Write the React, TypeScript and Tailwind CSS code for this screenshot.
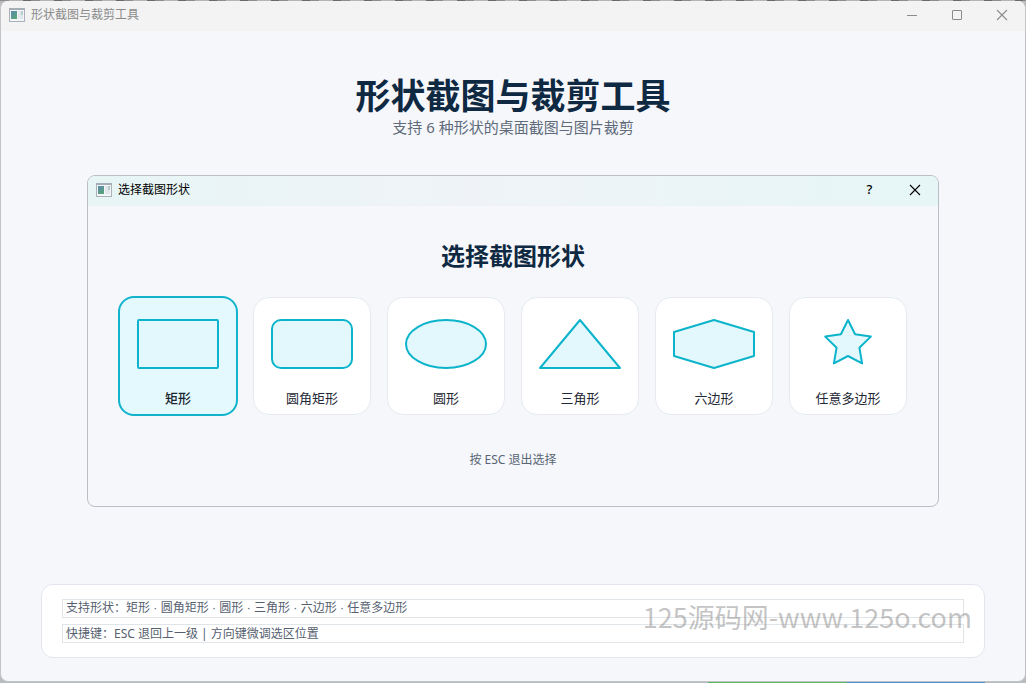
import type { ReactNode } from "react";

const outline = {
  fill: "#e3f8fd",
  stroke: "#0cb4cb",
  strokeWidth: 2,
  strokeLinejoin: "round" as const,
};

type Shape = { id: string; label: string; drawing: ReactNode };

const shapes: Shape[] = [
  { id: "rect", label: "矩形", drawing: <rect x="2" y="2" width="80" height="48" rx="1" {...outline} /> },
  { id: "rounded", label: "圆角矩形", drawing: <rect x="2" y="2" width="80" height="48" rx="9" {...outline} /> },
  { id: "circle", label: "圆形", drawing: <ellipse cx="42" cy="26" rx="40" ry="24" {...outline} /> },
  { id: "triangle", label: "三角形", drawing: <polygon points="42,2 82,50 2,50" {...outline} /> },
  { id: "hexagon", label: "六边形", drawing: <polygon points="42,2 82,14 82,38 42,50 2,38 2,14" {...outline} /> },
  {
    id: "polygon",
    label: "任意多边形",
    drawing: (
      <polygon
        points="42,2 49.1,16.3 64.8,18.6 53.4,29.7 56.1,45.4 42,38 27.9,45.4 30.6,29.7 19.2,18.6 34.9,16.3"
        {...outline}
      />
    ),
  },
];

function AppIcon() {
  return (
    <svg width="16" height="14" viewBox="0 0 16 14" aria-hidden="true">
      <defs>
        <linearGradient id="pane" x1="0" y1="0" x2="0.6" y2="1">
          <stop offset="0" stopColor="#5b8bb0" />
          <stop offset="1" stopColor="#5aa27c" />
        </linearGradient>
      </defs>
      <rect x="0.5" y="0.5" width="15" height="13" fill="#f3f5f7" stroke="#a9b2ba" />
      <rect x="0" y="0" width="16" height="2" fill="#a5adb6" />
      <rect x="2" y="3" width="6" height="8" fill="url(#pane)" />
      <rect x="9" y="3" width="3" height="8" fill="#e4e8ec" />
      <rect x="12" y="3" width="2" height="4" fill="#b3cdc9" />
      <rect x="12" y="7" width="2" height="4" fill="#e1e6ea" />
    </svg>
  );
}

function CloseGlyph() {
  return (
    <svg width="12" height="12" viewBox="0 0 12 12" fill="none" stroke="currentColor" aria-hidden="true">
      <path d="M1 1 11 11M11 1 1 11" strokeWidth="1.1" />
    </svg>
  );
}

function ShapeCard({ shape, selected }: { shape: Shape; selected: boolean }) {
  return (
    <button
      type="button"
      aria-pressed={selected}
      className={
        selected
          ? "flex h-[120px] flex-col items-center rounded-2xl border-2 border-[#12b4cc] bg-[#e3f9fd] pt-5 text-[13px] leading-5 font-medium text-[#1a2730]"
          : "m-px flex h-[118px] flex-col items-center rounded-2xl border border-[#e6eaf0] bg-white pt-5 text-[13px] leading-5 text-[#1f2937]"
      }
    >
      <svg width="84" height="52" viewBox="0 0 84 52" aria-hidden="true">
        {shape.drawing}
      </svg>
      <span className="mt-[18px]">{shape.label}</span>
    </button>
  );
}

function ShapeDialog() {
  return (
    <section
      aria-label="选择截图形状"
      className="mx-[86px] mt-[38px] overflow-hidden rounded-lg border border-[#b9bfc5]"
    >
      <header className="flex h-[30px] items-center bg-linear-to-r from-[#e7f5f5] via-[#eff3f7] via-45% to-[#e6f6f6] pb-0.5 pl-2 text-xs text-black">
        <AppIcon />
        <span className="ml-1.5">选择截图形状</span>
        <div className="ml-auto flex h-full">
          <button type="button" aria-label="帮助" className="flex w-[45px] items-center justify-center text-[13px] font-medium">
            ?
          </button>
          <button type="button" aria-label="关闭" className="flex w-[46px] items-center justify-center">
            <CloseGlyph />
          </button>
        </div>
      </header>
      <h2 className="mt-8 text-center text-2xl leading-9 font-bold text-[#0f2942]">选择截图形状</h2>
      <div className="mt-[22px] grid grid-cols-6 gap-3.5 px-[30px]">
        {shapes.map((shape) => (
          <ShapeCard key={shape.id} shape={shape} selected={shape.id === "rect"} />
        ))}
      </div>
      <p className="mt-[34px] mb-9 text-center text-xs leading-5 text-[#5a6675]">按 ESC 退出选择</p>
    </section>
  );
}

export default function App() {
  return (
    <div className="flex min-h-screen flex-col bg-[linear-gradient(90deg,#b9bbbd_69%,#5cb860_69%,#5cb860_82.6%,#4a90d0_82.6%,#4a90d0_96%,#b9bbbd_96%)] font-['Noto_Sans','Noto_Sans_CJK_SC',sans-serif]">
      <div className="h-px bg-[repeating-linear-gradient(90deg,#8e8c8c_0,#8e8c8c_9px,#b5b3b3_9px,#b5b3b3_23px,#6d696a_23px,#6d696a_31px)]" />
      <main className="mb-px flex flex-1 flex-col overflow-hidden rounded-lg border border-t-0 border-[#c0c4c8] bg-[#f5f7fb]">
        <header className="flex h-[30px] items-center bg-[#f3f3f3] pb-0.5 pl-2 text-xs text-[#8b8b8b]">
          <AppIcon />
          <span className="ml-1.5">形状截图与裁剪工具</span>
          <div className="ml-auto flex h-full">
            <button type="button" aria-label="最小化" className="flex w-[45px] items-center justify-center">
              <svg width="10" height="10" viewBox="0 0 10 10" stroke="currentColor" aria-hidden="true">
                <path d="M0 5.5H10" />
              </svg>
            </button>
            <button type="button" aria-label="最大化" className="flex w-[45px] items-center justify-center">
              <svg width="10" height="10" viewBox="0 0 10 10" fill="none" stroke="currentColor" aria-hidden="true">
                <rect x="0.5" y="0.5" width="9" height="9" rx="0.5" />
              </svg>
            </button>
            <button type="button" aria-label="关闭" className="flex w-[46px] items-center justify-center">
              <CloseGlyph />
            </button>
          </div>
        </header>

        <h1 className="mt-11 text-center text-[35px] leading-[42px] font-bold text-[#0f2942]">
          形状截图与裁剪工具
        </h1>
        <p className="text-center text-[15px] leading-5 text-[#5f6b7a]">支持 6 种形状的桌面截图与图片裁剪</p>

        <ShapeDialog />

        <footer className="relative mx-10 mt-auto mb-[23px] flex flex-col gap-1.5 rounded-xl border border-[#e2e6ec] bg-white px-5 py-3.5 text-xs text-[#566170]">
          <p className="border border-[#e0e5ea] pl-[3px] font-['Liberation_Sans','Noto_Sans_CJK_SC',sans-serif] leading-[17px]">
            支持形状：矩形 · 圆角矩形 · 圆形 · 三角形 · 六边形 · 任意多边形
          </p>
          <p className="border border-[#e0e5ea] pl-[3px] leading-[17px]">
            快捷键：ESC 退回上一级 | 方向键微调选区位置
          </p>
          <span className="absolute top-3 right-3 font-['Noto_Sans_CJK_SC',sans-serif] text-[27px] leading-10 text-[#8a8a8a]/50">
            125源码网-www.125o.com
          </span>
        </footer>
      </main>
    </div>
  );
}
